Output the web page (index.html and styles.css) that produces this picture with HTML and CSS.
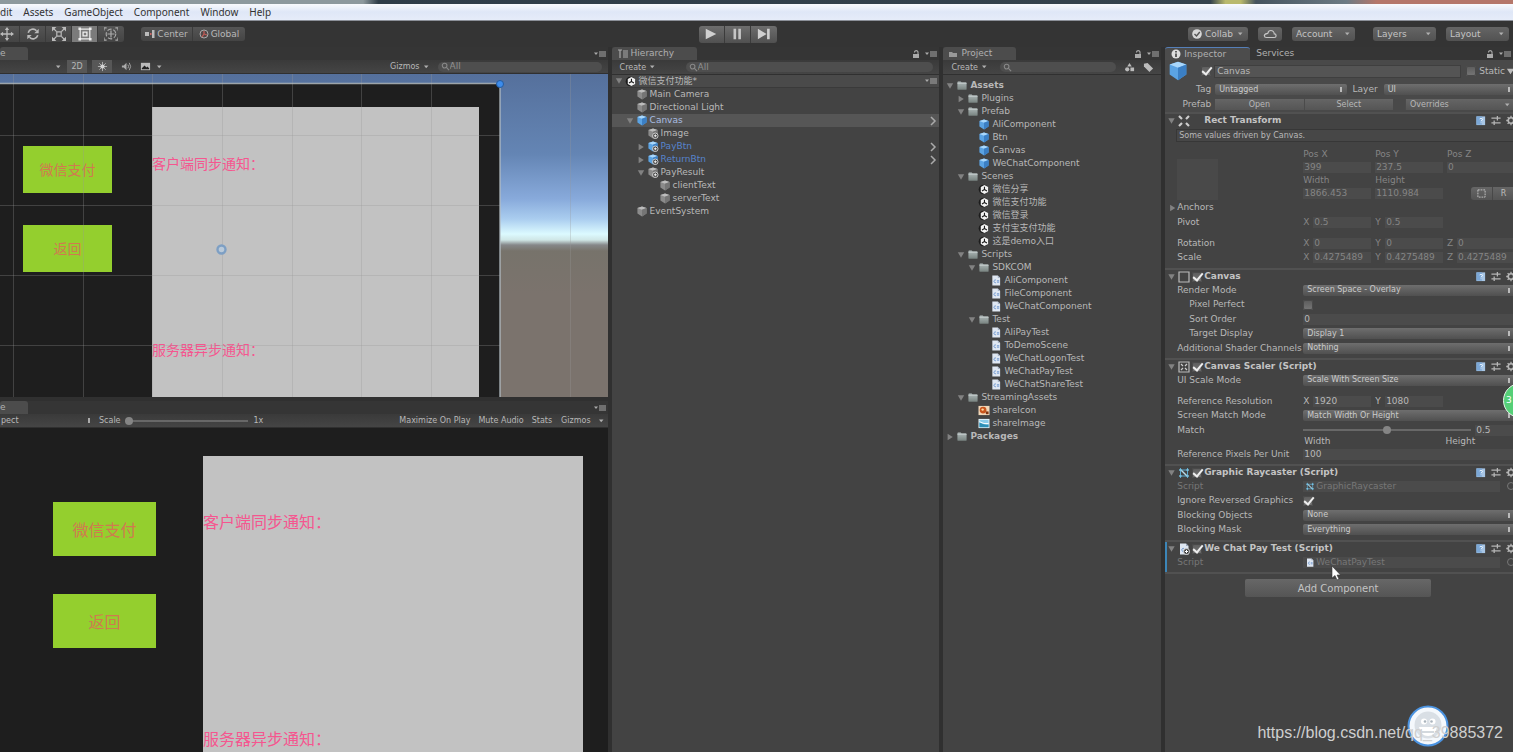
FILE: index.html
```html
<!DOCTYPE html>
<html lang="zh-CN">
<head>
<meta charset="utf-8">
<title>Unity Editor</title>
<link rel="stylesheet" href="styles.css">
</head>
<body>
<svg class="defs" aria-hidden="true">
  <defs>
    <linearGradient id="gf" x1="0" y1="0" x2="0" y2="1"><stop offset="0" stop-color="#b3bdbd"/><stop offset="1" stop-color="#77827f"/></linearGradient>
    <symbol id="cube" viewBox="0 0 12 12"><path d="M6 .5l5 1.6v6L6 11.500 1 8.100v-6z" fill="#8b8b8b"/><path d="M6 .5l5 1.600L6 4 1 2.100z" fill="#bdbdbd"/><path d="M6 4l5-1.900v6L6 11.500z" fill="#757575"/></symbol>
    <symbol id="bcube" viewBox="0 0 12 12"><path d="M6 .5l5 1.600v6L6 11.500 1 8.100v-6z" fill="#5ba3e3"/><path d="M6 .5l5 1.600L6 4 1 2.100z" fill="#a9d7fb"/><path d="M6 4l5-1.900v6L6 11.500z" fill="#3b7fc4"/></symbol>
    <symbol id="plus" viewBox="0 0 12 12"><circle cx="8.500" cy="8.500" r="3" fill="#333" stroke="#ddd" stroke-width="1"/><path d="M8.500 6.800v3.400M6.800 8.500h3.400" stroke="#fff"/></symbol>
    <symbol id="folder" viewBox="0 0 12 12"><path d="M1 2.500q0-1 1-1h2.500l1 1H10q1 0 1 1V10q0 .7-1 .7H2q-1 0-1-1z" fill="url(#gf)"/><path d="M1 3.700h10" stroke="#cdd5d4" stroke-width=".7"/></symbol>
    <symbol id="unity" viewBox="0 0 12 12"><circle cx="5.500" cy="6" r="5.300" fill="#1c1c1c"/><path d="M6.500 1l4 2.400v5.200l-4 2.400-4-2.400V3.400z" fill="#f2f2f2"/><path d="M6.500 6V3M6.500 6l2.700 1.600M6.500 6L3.800 7.600" stroke="#1c1c1c" stroke-width="1.200"/></symbol>
    <symbol id="cs" viewBox="0 0 12 12"><path d="M2 .5h6l2.500 2.500v8.500H2z" fill="#dfe7f2"/><path d="M8 .5v2.500h2.500z" fill="#98a6ba"/><path d="M6 5.600a1.500 1.500 0 1 0 0 2.600M7 6.300h2.500M7 7.800h2.500" stroke="#5c89c8" stroke-width=".9" fill="none"/></symbol>
    <symbol id="down" viewBox="0 0 10 10"><path d="M1 1.500h8L5 8.500z" fill="#828282"/></symbol>
    <symbol id="right" viewBox="0 0 10 10"><path d="M2 1v8l6.500-4z" fill="#828282"/></symbol>
    <symbol id="chev" viewBox="0 0 8 10"><path d="M2 1l4 4-4 4" fill="none" stroke="#aaa" stroke-width="1.500"/></symbol>
    <symbol id="lock" viewBox="0 0 8 10"><path d="M1 5h6v4H1z" fill="#aaa"/><path d="M2.500 3.500V3a1.800 1.800 0 0 1 3.500 0v2.500" fill="none" stroke="#aaa" stroke-width="1.100"/></symbol>
    <symbol id="menu" viewBox="0 0 12 8"><path d="M0 2.500h4L2 5z" fill="#aaa"/><path d="M5 2h7M5 4h7M5 6h7" stroke="#aaa" stroke-width="1.200"/></symbol>
    <symbol id="drop" viewBox="0 0 8 6"><path d="M2 1.500h4.500L4.200 4.200z" fill="#b0b0b0"/></symbol>
    <symbol id="search" viewBox="0 0 10 10"><circle cx="4" cy="4" r="2.600" fill="none" stroke="#888" stroke-width="1.200"/><path d="M6 6l3 3" stroke="#888" stroke-width="1.300"/></symbol>
    <symbol id="book" viewBox="0 0 12 12"><path d="M1 1.500h9.500v9.500H1z" fill="#a8c6e5"/><path d="M1 1.500h6v9H1z" fill="#7ba7d6"/><path d="M4.500 4.300q1.500-1.600 3 0 .4 1.200-1.400 2v.8M6.100 8v1" stroke="#eef6ff" fill="none"/></symbol>
    <symbol id="preset" viewBox="0 0 12 12"><path d="M1 3.500h10M1 8.500h10M7.500 1v5M4 6v5" stroke="#b5b5b5" stroke-width="1.400"/></symbol>
    <symbol id="gear" viewBox="0 0 12 12"><circle cx="6" cy="6" r="3" fill="none" stroke="#b5b5b5" stroke-width="1.800"/><path d="M6 .8v2M6 9.200v2M.8 6h2M9.200 6h2M2.300 2.300l1.400 1.400M8.300 8.300l1.400 1.400M9.700 2.300L8.300 3.700M3.700 8.300L2.300 9.700" stroke="#b5b5b5" stroke-width="1.400"/></symbol>
    <symbol id="ray" viewBox="0 0 12 12"><path d="M2.500 1v10M9.500 1v10M1 3h10M1 9h10" stroke="#5ba9cf"/><path d="M3 3l6 6" stroke="#b6dcec" stroke-width="1.400"/><path d="M1.500 2h2v2h-2zM8.500 2h2v2h-2zM1.500 8h2v2h-2zM8.500 8h2v2h-2z" fill="#7cc1e0"/></symbol>
  </defs>
</svg>

<div class="desktop-strip"></div>
<nav class="menubar">
  <a href="#edit">dit</a><a href="#assets">Assets</a><a href="#go">GameObject</a><a href="#comp">Component</a><a href="#win">Window</a><a href="#help">Help</a>
</nav>

<header class="toolbar">
  <div class="tools-left">
    <div class="group tools">
      <button aria-label="Move"><svg viewBox="0 0 16 16"><path d="M8 2v12M2 8h12" stroke="#bbb" stroke-width="1.500"/><path d="M8 0l2.500 3.500h-5zM8 16l2.500-3.500h-5zM0 8l3.500-2.500v5zM16 8l-3.500-2.500v5z" fill="#bbb"/></svg></button>
      <button aria-label="Rotate"><svg viewBox="0 0 16 16"><path d="M2.500 6.500A5.600 5.600 0 0 1 12 4.300M13.500 9.500A5.600 5.600 0 0 1 4 11.700" fill="none" stroke="#bbb" stroke-width="1.800"/><path d="M14.500 2v5h-5zM1.500 14V9h5z" fill="#bbb"/></svg></button>
      <button aria-label="Scale"><svg viewBox="0 0 16 16"><path d="M5.500 5.500h5v5h-5zM2 2l3 3M14 2l-3 3M2 14l3-3M14 14l-3-3" fill="none" stroke="#bbb" stroke-width="1.400"/><path d="M0 0h5L0 5zM16 0v5l-5-5zM0 16v-5l5 5zM16 16h-5l5-5z" fill="#bbb"/></svg></button>
      <button aria-label="Rect" class="on"><svg viewBox="0 0 16 16"><path d="M2.500 2.500h11v11h-11z" fill="none" stroke="#eee" stroke-width="1.400"/><path d="M.5.5h3v3h-3zM12.500.5h3v3h-3zM.5 12.500h3v3h-3zM12.500 12.500h3v3h-3z" fill="#eee"/><path d="M5.800 5.800h4.400v4.400H5.800z" fill="none" stroke="#eee" stroke-width="1.500"/></svg></button>
      <button aria-label="Transform"><svg viewBox="0 0 16 16"><circle cx="8" cy="8" r="5.500" fill="none" stroke="#aaa" stroke-width="1.300" stroke-dasharray="5 2"/><path d="M8 4v8M4 8h8M0 4V1h3M13 1h3v3M0 12v3h3M13 15h3v-3" fill="none" stroke="#aaa" stroke-width="1.400"/></svg></button>
    </div>
    <div class="group pivots">
      <button><svg viewBox="0 0 10 10"><path d="M0 3h4v4H0z" fill="#bbb"/><path d="M5 5h1.500" stroke="#c66" stroke-width="2"/><path d="M7 1h2.500v8H7z" fill="#bbb"/></svg>Center</button>
      <button><svg viewBox="0 0 10 10"><circle cx="5" cy="5" r="4" fill="#514848" stroke="#aaa"/><path d="M5 5V2M5 5l3 1M5 5L3 8" stroke="#c05b55" stroke-width="1.300"/></svg>Global</button>
    </div>
  </div>
  <div class="group play">
    <button aria-label="Play"><svg viewBox="0 0 16 16"><path d="M2 2l12 6-12 6z" fill="#d0d0d0"/></svg></button>
    <button aria-label="Pause"><svg viewBox="0 0 16 16"><path d="M4 2h3v12H4zM9.500 2h3v12h-3z" fill="#c5c5c5"/></svg></button>
    <button aria-label="Step"><svg viewBox="0 0 16 16"><path d="M1 2l10 6-10 6zM11.500 2h3v12h-3z" fill="#d0d0d0"/></svg></button>
  </div>
  <div class="tools-right">
    <button class="pill"><svg viewBox="0 0 10 10"><circle cx="5" cy="5" r="4.800" fill="#d8d8d8"/><path d="M2.500 5l2 2 3.300-4" fill="none" stroke="#555" stroke-width="1.400"/></svg>Collab<svg class="dd"><use href="#drop"/></svg></button>
    <button class="pill cloud" aria-label="Cloud"><svg viewBox="0 0 14 10"><path d="M3.500 8.500h7.800a1.800 1.800 0 0 0 0-3.600Q10.800 1.500 7.800 1.500 5.500 1.500 4.800 4.300 1.300 4.700 1.300 6.800q.2 1.700 2.200 1.700z" fill="none" stroke="#c5c5c5" stroke-width="1.200"/></svg></button>
    <button class="pill wide">Account<svg class="dd"><use href="#drop"/></svg></button>
    <button class="pill wide apart">Layers<svg class="dd"><use href="#drop"/></svg></button>
    <button class="pill wide">Layout<svg class="dd"><use href="#drop"/></svg></button>
  </div>
</header>

<main class="workspace">
  <div class="views">
    <section class="view">
      <div class="tabs"><button class="tab tab-cut">e</button><svg class="menu"><use href="#menu"/></svg></div>
      <div class="bar">
        <svg class="dd shade"><use href="#drop"/></svg>
        <button class="lit two-d">2D</button>
        <button class="lit" aria-label="Lighting"><svg viewBox="0 0 12 12"><circle cx="6" cy="6" r="2.300" fill="#eee"/><path d="M6 1v10M1 6h10M2.500 2.500l7 7M9.500 2.500l-7 7" stroke="#ccc" stroke-width=".8"/></svg></button>
        <button class="flat" aria-label="Audio"><svg viewBox="0 0 12 12"><path d="M1 5h2l3-3v8L3 7H1z" fill="#aaa"/><path d="M7.500 4q1.500 2 0 4M9 2q3 4 0 8" fill="none" stroke="#aaa"/></svg></button>
        <button class="flat" aria-label="Effects"><svg viewBox="0 0 12 12"><path d="M1 2h10v8H1z" fill="#bbb"/><path d="M2 8l3-3 2 2 1-1 2 2v1H2z" fill="#222"/></svg></button>
        <svg class="dd"><use href="#drop"/></svg>
        <button class="flat gizmos">Gizmos<svg class="dd"><use href="#drop"/></svg></button>
        <label class="search scene-search"><svg><use href="#search"/></svg><input type="text" aria-label="Search scene" value="All"></label>
      </div>
      <div class="scene">
        <div class="sky"></div>
        <div class="canvas-area"></div>
        <div class="sheet"></div>
        <button class="green s1">微信支付</button>
        <button class="green s2">返回</button>
        <p class="note n1">客户端同步通知<span class="colon">：</span></p>
        <p class="note n2">服务器异步通知<span class="colon">：</span></p>
        <svg class="grid-lines"><path d="M13.500 0v330M83.500 0v330M152.500 0v330M222.500 0v330M292.500 0v330M361.500 0v330M431.500 0v330M570.500 0v330M0 61.500h500M0 131.500h500M0 201.500h500M0 271.500h500" stroke="#999" stroke-opacity=".3"/><path d="M0 9.500h500V330" fill="none" stroke="#b3bcc2" stroke-opacity=".85" stroke-width="1.500"/><circle cx="500" cy="10" r="3.500" fill="#3c8cec" stroke="#245b9e"/><circle cx="221.500" cy="175.500" r="4" fill="#b9c9d9" stroke="#7d9fc4" stroke-width="2.400"/></svg>
      </div>
    </section>
    <section class="view">
      <div class="tabs"><button class="tab tab-cut">e</button><svg class="menu"><use href="#menu"/></svg></div>
      <div class="bar game-bar">
        <select class="aspect" aria-label="Aspect"><option>pect</option></select>
        <label class="scale">Scale<input type="range" min="1" max="5" value="1"></label><span>1x</span>
        <div class="bar-end"><button class="flat">Maximize On Play</button><button class="flat">Mute Audio</button><button class="flat">Stats</button><button class="flat wide-gap">Gizmos<svg class="dd"><use href="#drop"/></svg></button></div>
      </div>
      <div class="game">
        <div class="sheet"></div>
        <button class="green g1">微信支付</button>
        <button class="green g2">返回</button>
        <p class="note n3">客户端同步通知<span class="colon">：</span></p>
        <p class="note n4">服务器异步通知<span class="colon">：</span></p>
      </div>
    </section>
  </div>

  <section class="panel">
    <div class="tabs"><button class="tab"><svg viewBox="0 0 10 10"><path d="M0 1h4M2 1v8M5 2h5M5 4h5M5 6h5M5 8h5" stroke="#aaa" stroke-width="1.200"/></svg>Hierarchy</button><svg class="lock"><use href="#lock"/></svg><svg class="menu"><use href="#menu"/></svg></div>
    <div class="bar"><button class="flat create">Create<svg class="dd"><use href="#drop"/></svg></button><label class="search hier-search"><svg><use href="#search"/></svg><input type="text" aria-label="Search hierarchy" value="All"></label></div>
    <ul class="tree">
      <li class="root"><svg class="tw"><use href="#down"/></svg><svg class="ic"><use href="#unity"/></svg>微信支付功能*<svg class="menu end"><use href="#menu"/></svg></li>
      <li class="l1"><i class="tw"></i><svg class="ic"><use href="#cube"/></svg>Main Camera</li>
      <li class="l1"><i class="tw"></i><svg class="ic"><use href="#cube"/></svg>Directional Light</li>
      <li class="l1 sel"><svg class="tw"><use href="#down"/></svg><svg class="ic"><use href="#bcube"/></svg>Canvas<svg class="chev end"><use href="#chev"/></svg></li>
      <li class="l2"><i class="tw"></i><svg class="ic"><use href="#cube"/><use href="#plus"/></svg>Image</li>
      <li class="l2 blue"><svg class="tw"><use href="#right"/></svg><svg class="ic"><use href="#bcube"/><use href="#plus"/></svg>PayBtn<svg class="chev end"><use href="#chev"/></svg></li>
      <li class="l2 blue"><svg class="tw"><use href="#right"/></svg><svg class="ic"><use href="#bcube"/><use href="#plus"/></svg>ReturnBtn<svg class="chev end"><use href="#chev"/></svg></li>
      <li class="l2"><svg class="tw"><use href="#down"/></svg><svg class="ic"><use href="#cube"/><use href="#plus"/></svg>PayResult</li>
      <li class="l3"><i class="tw"></i><svg class="ic"><use href="#cube"/></svg>clientText</li>
      <li class="l3"><i class="tw"></i><svg class="ic"><use href="#cube"/></svg>serverText</li>
      <li class="l1"><i class="tw"></i><svg class="ic"><use href="#cube"/></svg>EventSystem</li>
    </ul>
  </section>

  <section class="panel">
    <div class="tabs"><button class="tab short"><svg viewBox="0 0 10 10"><path d="M1 3h3l1 1h4v4H1z" fill="#999"/></svg>Project</button><svg class="lock"><use href="#lock"/></svg><svg class="menu"><use href="#menu"/></svg></div>
    <div class="bar"><button class="flat create">Create<svg class="dd"><use href="#drop"/></svg></button><label class="search proj-search"><svg><use href="#search"/></svg><input type="text" aria-label="Search project"></label>
      <button class="flat" aria-label="Filter by type"><svg viewBox="0 0 12 12"><path d="M6 1l2.500 4h-5z" fill="#bbb"/><circle cx="3.500" cy="8" r="2.300" fill="#bbb"/><path d="M7 6h4v4H7z" fill="#bbb"/></svg></button>
      <button class="flat tag-filter" aria-label="Filter by label"><svg viewBox="0 0 12 12"><path d="M1 2l4-1 6 6-4 4-6-6z" fill="#bbb"/></svg></button></div>
    <ul class="tree proj">
      <li class="l0 b"><svg class="tw"><use href="#down"/></svg><svg class="ic"><use href="#folder"/></svg>Assets</li>
      <li class="l1"><svg class="tw"><use href="#right"/></svg><svg class="ic"><use href="#folder"/></svg>Plugins</li>
      <li class="l1"><svg class="tw"><use href="#down"/></svg><svg class="ic"><use href="#folder"/></svg>Prefab</li>
      <li class="l2"><i class="tw"></i><svg class="ic"><use href="#bcube"/></svg>AliComponent</li>
      <li class="l2"><i class="tw"></i><svg class="ic"><use href="#bcube"/></svg>Btn</li>
      <li class="l2"><i class="tw"></i><svg class="ic"><use href="#bcube"/></svg>Canvas</li>
      <li class="l2"><i class="tw"></i><svg class="ic"><use href="#bcube"/></svg>WeChatComponent</li>
      <li class="l1"><svg class="tw"><use href="#down"/></svg><svg class="ic"><use href="#folder"/></svg>Scenes</li>
      <li class="l2"><i class="tw"></i><svg class="ic"><use href="#unity"/></svg>微信分享</li>
      <li class="l2"><i class="tw"></i><svg class="ic"><use href="#unity"/></svg>微信支付功能</li>
      <li class="l2"><i class="tw"></i><svg class="ic"><use href="#unity"/></svg>微信登录</li>
      <li class="l2"><i class="tw"></i><svg class="ic"><use href="#unity"/></svg>支付宝支付功能</li>
      <li class="l2"><i class="tw"></i><svg class="ic"><use href="#unity"/></svg>这是demo入口</li>
      <li class="l1"><svg class="tw"><use href="#down"/></svg><svg class="ic"><use href="#folder"/></svg>Scripts</li>
      <li class="l2"><svg class="tw"><use href="#down"/></svg><svg class="ic"><use href="#folder"/></svg>SDKCOM</li>
      <li class="l3"><i class="tw"></i><svg class="ic"><use href="#cs"/></svg>AliComponent</li>
      <li class="l3"><i class="tw"></i><svg class="ic"><use href="#cs"/></svg>FileComponent</li>
      <li class="l3"><i class="tw"></i><svg class="ic"><use href="#cs"/></svg>WeChatComponent</li>
      <li class="l2"><svg class="tw"><use href="#down"/></svg><svg class="ic"><use href="#folder"/></svg>Test</li>
      <li class="l3"><i class="tw"></i><svg class="ic"><use href="#cs"/></svg>AliPayTest</li>
      <li class="l3"><i class="tw"></i><svg class="ic"><use href="#cs"/></svg>ToDemoScene</li>
      <li class="l3"><i class="tw"></i><svg class="ic"><use href="#cs"/></svg>WeChatLogonTest</li>
      <li class="l3"><i class="tw"></i><svg class="ic"><use href="#cs"/></svg>WeChatPayTest</li>
      <li class="l3"><i class="tw"></i><svg class="ic"><use href="#cs"/></svg>WeChatShareTest</li>
      <li class="l1"><svg class="tw"><use href="#down"/></svg><svg class="ic"><use href="#folder"/></svg>StreamingAssets</li>
      <li class="l2"><i class="tw"></i><svg class="ic" viewBox="0 0 12 12"><path d="M0 1h12v10H0z" fill="#f0d7b8"/><circle cx="5" cy="5.500" r="3.700" fill="#c8541c"/><circle cx="4.500" cy="5" r="1.300" fill="#ffd9a0"/><path d="M8 7h3v3H8z" fill="#7d3512"/></svg>shareIcon</li>
      <li class="l2"><i class="tw"></i><svg class="ic" viewBox="0 0 12 12"><path d="M0 1h12v10H0z" fill="#e6f4fa"/><path d="M1 2h10v8H1z" fill="#8acbe9"/><path d="M1 5q5 3 10 2v3H1z" fill="#2e8fb5"/><path d="M1 4q5 3 10 2" stroke="#fff" fill="none"/></svg>shareImage</li>
      <li class="l0 b"><svg class="tw"><use href="#right"/></svg><svg class="ic"><use href="#folder"/></svg>Packages</li>
    </ul>
  </section>

  <section class="panel inspector">
    <div class="tabs"><button class="tab focus"><svg viewBox="0 0 10 10"><circle cx="5" cy="5" r="4.500" fill="#ddd"/><path d="M5 2v1.500M5 4.500V8" stroke="#333" stroke-width="1.500"/></svg>Inspector</button><button class="tab off">Services</button><svg class="lock"><use href="#lock"/></svg><svg class="menu"><use href="#menu"/></svg></div>
    <div class="insp-body">
      <div class="obj-head">
        <div class="cube-cell"><svg><use href="#bcube"/></svg><input type="checkbox" aria-label="Active" checked></div>
        <div class="line name-line"><input type="text" class="name" aria-label="Name" value="Canvas"><label class="static"><input type="checkbox">Static</label><svg class="tri" viewBox="0 0 10 10"><path d="M1 2h8L5 8z" fill="#bbb"/></svg></div>
        <label class="rlabel" for="tag">Tag</label>
        <div class="line"><select id="tag"><option>Untagged</option></select><label for="layer">Layer</label><select id="layer"><option>UI</option></select></div>
        <span class="rlabel">Prefab</span>
        <div class="line prefab"><button>Open</button><button>Select</button><button class="over">Overrides<svg class="dd"><use href="#drop"/></svg></button></div>
      </div>

      <section class="comp">
        <h2><svg class="tw"><use href="#down"/></svg><svg class="ic" viewBox="0 0 12 12"><path d="M1 1l3 3M11 1L8 4M1 11l3-3M11 11L8 8" stroke="#ccc" stroke-width="2.200"/></svg><b>Rect Transform</b><span class="acts"><svg><use href="#book"/></svg><svg><use href="#preset"/></svg><svg><use href="#gear"/></svg></span></h2>
        <p class="help">Some values driven by Canvas.</p>
        <div class="rect-block">
          <div class="anchor-box"></div>
          <div class="rect-fields">
            <label for="px">Pos X</label><label for="py">Pos Y</label><label for="pz">Pos Z</label>
            <input id="px" type="text" value="399"><input id="py" type="text" value="237.5"><input id="pz" type="text" value="0">
            <label for="w">Width</label><label for="h">Height</label><i></i>
            <input id="w" type="text" value="1866.453"><input id="h" type="text" value="1110.984"><span class="rbtns"><button aria-label="Blueprint"><svg viewBox="0 0 10 10"><path d="M1 1h8v8H1z" fill="none" stroke="#ccc" stroke-dasharray="2 1"/></svg></button><button>R</button></span>
          </div>
        </div>
        <div class="row tall fold"><svg class="tw"><use href="#right"/></svg><span>Anchors</span></div>
        <div class="row dim"><span>Pivot</span><div class="xyz"><label>X<input type="text" value="0.5"></label><label>Y<input type="text" value="0.5"></label></div></div>
        <div class="row dim spaced"><span>Rotation</span><div class="xyz"><label>X<input type="text" value="0"></label><label>Y<input type="text" value="0"></label><label>Z<input type="text" value="0"></label></div></div>
        <div class="row tall dim"><span>Scale</span><div class="xyz"><label>X<input type="text" value="0.4275489"></label><label>Y<input type="text" value="0.4275489"></label><label>Z<input type="text" value="0.4275489"></label></div></div>
      </section>

      <section class="comp">
        <h2><svg class="tw"><use href="#down"/></svg><svg class="ic" viewBox="0 0 12 12"><path d="M1 1h10v10H1z" fill="none" stroke="#bbb" stroke-width="1.200"/></svg><input type="checkbox" aria-label="Canvas enabled" checked><b>Canvas</b><span class="acts"><svg><use href="#book"/></svg><svg><use href="#preset"/></svg><svg><use href="#gear"/></svg></span></h2>
        <div class="row"><label for="rm">Render Mode</label><select id="rm"><option>Screen Space - Overlay</option></select></div>
        <div class="row tall sub"><label for="pp">Pixel Perfect</label><input id="pp" type="checkbox"></div>
        <div class="row sub"><label for="so">Sort Order</label><input id="so" type="text" value="0"></div>
        <div class="row tall sub"><label for="td">Target Display</label><select id="td"><option>Display 1</option></select></div>
        <div class="row"><label for="asc">Additional Shader Channels</label><select id="asc"><option>Nothing</option></select></div>
      </section>

      <section class="comp">
        <h2><svg class="tw"><use href="#down"/></svg><svg class="ic" viewBox="0 0 12 12"><path d="M1 1h10v10H1z" fill="none" stroke="#bbb" stroke-width="1.200"/><path d="M3 3l2 2M9 3L7 5M3 9l2-2M9 9L7 7" stroke="#ccc" stroke-width="1.200"/></svg><input type="checkbox" aria-label="Scaler enabled" checked><b>Canvas Scaler (Script)</b><span class="acts"><svg><use href="#book"/></svg><svg><use href="#preset"/></svg><svg><use href="#gear"/></svg></span></h2>
        <div class="row"><label for="us">UI Scale Mode</label><select id="us"><option>Scale With Screen Size</option></select></div>
        <div class="row spaced"><span>Reference Resolution</span><div class="xyz"><label>X<input type="text" value="1920"></label><label>Y<input type="text" value="1080"></label></div></div>
        <div class="row tall"><label for="sm">Screen Match Mode</label><select id="sm"><option>Match Width Or Height</option></select></div>
        <div class="row"><label for="mt">Match</label><div class="slide"><input id="mt" type="range" min="0" max="1" step="0.1" value="0.5"><input type="text" aria-label="Match value" value="0.5"></div></div>
        <div class="ends"><span>Width</span><span>Height</span></div>
        <div class="row"><label for="rp">Reference Pixels Per Unit</label><input id="rp" type="text" value="100"></div>
      </section>

      <section class="comp">
        <h2><svg class="tw"><use href="#down"/></svg><svg class="ic"><use href="#ray"/></svg><input type="checkbox" aria-label="Raycaster enabled" checked><b>Graphic Raycaster (Script)</b><span class="acts"><svg><use href="#book"/></svg><svg><use href="#preset"/></svg><svg><use href="#gear"/></svg></span></h2>
        <div class="row faded"><span>Script</span><div class="obj"><a href="#gr"><svg><use href="#ray"/></svg>GraphicRaycaster</a><i class="pick"></i></div></div>
        <div class="row tall"><label for="ir">Ignore Reversed Graphics</label><input id="ir" type="checkbox" checked></div>
        <div class="row"><label for="bo">Blocking Objects</label><select id="bo"><option>None</option></select></div>
        <div class="row tall"><label for="bm">Blocking Mask</label><select id="bm"><option>Everything</option></select></div>
      </section>

      <section class="comp added">
        <h2><svg class="tw"><use href="#down"/></svg><svg class="ic"><use href="#cs"/><use href="#plus"/></svg><input type="checkbox" aria-label="Test enabled" checked><b>We Chat Pay Test (Script)</b><span class="acts"><svg><use href="#book"/></svg><svg><use href="#preset"/></svg><svg><use href="#gear"/></svg></span></h2>
        <div class="row faded"><span>Script</span><div class="obj"><a href="#wp"><svg><use href="#cs"/></svg>WeChatPayTest</a><i class="pick"></i></div></div>
      </section>
      <div class="add-wrap"><button class="add">Add Component</button></div>
    </div>
  </section>
</main>

<svg class="cursor" viewBox="0 0 10 16"><path d="M1 1v12l3-2.500L6 15l2-1-2-4h3.500z" fill="#fff" stroke="#333" stroke-width=".6"/></svg>
<div class="bubble">3</div>
<svg class="robot" viewBox="0 0 42 42"><circle cx="21" cy="21" r="19.500" fill="#f4f8fc" stroke="#4b93e0" stroke-width="2"/><circle cx="21" cy="20" r="13.500" fill="#d9dfe5"/><circle cx="17" cy="16.500" r="3" fill="#fff"/><circle cx="25.500" cy="16.500" r="3" fill="#fff"/><circle cx="18" cy="16.500" r="1.300" fill="#aab4bd"/><circle cx="24.500" cy="16.500" r="1.300" fill="#aab4bd"/><path d="M12 22h18q-2 9-9 9t-9-9z" fill="#fff"/><path d="M15 27h12" stroke="#c4ccd3" stroke-width="1.500"/></svg>
<p class="watermark">https://blog.csdn.net/qq_39885372</p>
</body>
</html>
```
FILE: styles.css
```css
* { box-sizing: border-box; }
body {
  margin: 0; height: 100vh; overflow: hidden; position: relative;
  display: flex; flex-direction: column;
  background: #343434; color: #b8b8b8;
  font: 9px/13px "DejaVu Sans", "Noto Sans CJK SC", sans-serif;
}
p, ul, h2 { margin: 0; padding: 0; }
ul { list-style: none; }
svg { display: block; flex: none; }
button, input, select { font: inherit; color: inherit; margin: 0; padding: 0; border: 0; background: none; min-width: 0; }
a { color: inherit; text-decoration: none; }
.defs { position: absolute; width: 0; height: 0; }
.dd { width: 8px; height: 6px; }
.menu { width: 12px; height: 8px; }
.lock { width: 8px; height: 10px; margin-left: auto; margin-right: 2px; }
.chev { width: 8px; height: 10px; }

.desktop-strip { flex: none; height: 4px; background: linear-gradient(90deg, #8d999d 24%, #2f3d48 25%, #35434d 80%, #b9b96c 81%, #b9b96c 82%, #46545e 83%, #6c7b84 89%, #b5776a 91%); }
.menubar {
  flex: none; height: 17px; display: flex; align-items: center; gap: 11px;
  background: linear-gradient(#f8fafd, #dfe7f7 50%, #e6ecf9); border-bottom: 1px solid #8c9099;
  color: #333; font: 10px/15px "Noto Sans", sans-serif;
}

.toolbar { flex: none; height: 26px; display: grid; grid-template-columns: 699fr auto 737fr; align-items: center; background: #343434; }
.tools-left, .tools-right, .group { display: flex; align-items: center; }
.tools-left { gap: 17px; }
.group { border-radius: 3px; overflow: hidden; background: linear-gradient(#555, #444); }
.group button { display: flex; align-items: center; justify-content: center; gap: 2px; height: 16px; border-right: 1px solid #3b3b3b; }
.group button:last-child { border-right: 0; }
.tools { margin-left: -6px; }
.tools button { width: 26px; }
.tools svg { width: 14px; height: 14px; }
.tools .on { background: #7b7b7b; }
.pivots button { width: 52px; height: 14px; }
.pivots svg { width: 10px; height: 10px; }
.play { background: linear-gradient(#6d6d6d, #505050); }
.play button { width: 26px; height: 17px; }
.play svg { width: 14px; height: 14px; }
.tools-right { justify-content: flex-end; gap: 10px; padding-right: 4px; }
.pill { display: flex; align-items: center; justify-content: space-between; gap: 3px; height: 14px; padding: 0 4px; border-radius: 3px; background: linear-gradient(#656565, #525252); color: #c4c4c4; }
.pill > svg:first-child:not(.dd) { width: 10px; height: 10px; }
.pill.cloud { width: 24px; justify-content: center; }
.pill.cloud > svg:first-child { width: 14px; }
.wide { width: 63px; }
.apart { margin-left: 8px; }

.workspace { flex: 1; min-height: 0; display: grid; grid-template-columns: 608fr 328fr 218fr 348fr; grid-template-rows: minmax(0, 1fr); column-gap: 4px; background: #303030; }
.views { display: grid; grid-template-rows: 350fr 351fr; gap: 4px; min-width: 0; min-height: 0; }
.view, .panel { display: flex; flex-direction: column; min-width: 0; min-height: 0; overflow: hidden; }
.panel { background: #434343; }
.tabs { flex: none; height: 13px; display: flex; align-items: center; gap: 3px; background: #353535; padding-right: 2px; }
.tabs > .menu:nth-child(2) { margin-left: auto; }
.tab { height: 13px; width: 85px; display: flex; align-items: center; gap: 3px; padding-left: 6px; border-radius: 3px 3px 0 0; background: #4c4c4c; color: #b0b0b0; }
.tab svg { width: 10px; height: 10px; }
.tab.short { width: 73px; padding-left: 5px; }
.tab-cut { width: 28px; padding-left: 0; }
.off { background: none; width: 60px; padding-left: 3px; }
.focus { border-top: 1px solid #557fb8; }
.bar { flex: none; height: 15px; display: flex; align-items: center; background: linear-gradient(#3a3a3a, #454545); border-bottom: 1px solid #303030; font-size: 8px; }
.view .bar { height: 14px; }
.bar button { display: flex; align-items: center; gap: 2px; height: 13px; }
.bar button svg:not(.dd) { width: 11px; height: 11px; }
.bar .lit { background: #575757; justify-content: center; width: 20px; margin-right: 5px; }
.shade { margin-left: 54px; margin-right: 5px; }
.flat { padding: 0 4px; }
.gizmos { margin-left: auto; }
.search { display: flex; align-items: center; gap: 0; height: 10px; border-radius: 5px; background: #4e4e4e; color: #909090; padding-left: 3px; font-size: 9px; min-width: 0; }
.search svg { width: 9px; height: 9px; }
.search input { flex: 1; width: 0; height: 10px; }
.scene-search { width: 27%; margin: 0 6px 0 4px; }
.hier-search { flex: 1; margin: 0 6px 0 20px; }
.proj-search { flex: 1; margin: 0 4px 0 3px; }
.tag-filter { margin-right: 3px; }
.bar .create { width: 54px; padding-left: 8px; }

.scene, .game { flex: 1; position: relative; overflow: hidden; background: #1e1e1e; font-family: "Noto Sans CJK SC", sans-serif; }
.sky { position: absolute; inset: 0; background: linear-gradient(#55709c, #6485b4 80px, #88aadb 125px, #aacdef 145px, #dcfaff 160px, #cfe6e6 166px, #858789 171px, #77736b 177px, #7b736d 220px, #7b736d); }
.canvas-area { position: absolute; left: 0; width: 500px; top: 9px; bottom: 0; background: #1e1e1e; }
.sheet { position: absolute; background: #c2c2c2; }
.scene .sheet { left: 152px; width: 327px; top: 33px; bottom: 0; }
.game .sheet { left: 203px; width: 380px; top: 28px; bottom: 0; }
.green { position: absolute; background: #94cf2e; color: #d07a50; }
.s1, .s2 { left: 23px; width: 89px; height: 47px; font-size: 14px; }
.s1 { top: 72px; }
.s2 { top: 151px; }
.g1, .g2 { left: 53px; width: 103px; height: 54px; font-size: 16px; }
.g1 { top: 74px; }
.g2 { top: 166px; }
.note { position: absolute; color: #f5568f; white-space: nowrap; line-height: 20px; }
.colon { font-family: "Noto Sans CJK TC", sans-serif; }
.n1, .n2 { left: 152px; font-size: 14px; }
.n1 { top: 79px; }
.n2 { top: 265px; }
.n3, .n4 { left: 203px; font-size: 16px; }
.n3 { top: 83px; }
.n4 { top: 300px; }
.grid-lines { position: absolute; inset: 0; width: 100%; height: 100%; }
.scale { display: flex; align-items: center; gap: 4px; margin: 0 6px 0 7px; }
.scale input { width: 123px; }
.bar-end { margin-left: auto; margin-right: 3px; display: flex; }
.bar .wide-gap { gap: 6px; padding: 0 0 0 5px; }
input[type=range] { appearance: none; height: 10px; background: linear-gradient(#686868, #686868) center / 100% 2px no-repeat; }
input[type=range]::-webkit-slider-thumb { appearance: none; width: 8px; height: 8px; border-radius: 50%; background: #858585; }

.tree { display: flex; flex-direction: column; }
.proj { padding-top: 4px; }
.tree li { display: flex; align-items: center; height: 13px; padding-left: 2px; padding-right: 2px; white-space: pre; }
.tree .tw { width: 10px; height: 8px; margin-right: 1px; }
.tree .ic { width: 12px; height: 11px; margin-right: 2px; }
.tree .root { background: #4a4a4a; border-bottom: 1px solid #3a3a3a; }
.tree .l1 { padding-left: 13px; }
.tree .l2 { padding-left: 24px; }
.tree .l3 { padding-left: 36px; }
.tree .sel { background: #565656; color: #a9bde2; }
.tree .blue { color: #5784cc; }
.b { font-weight: bold; }
.tree .end { margin-left: auto; }

.insp-body { margin-right: -2px; flex: 1; overflow: hidden; }
.obj-head { display: grid; grid-template-columns: 46px 1fr; column-gap: 4px; grid-template-rows: 22px 15px 15px; align-items: center; background: #494949; }
.cube-cell { display: flex; justify-content: space-between; align-items: center; padding-left: 3px; }
.cube-cell svg { width: 20px; height: 20px; }
.line { display: flex; align-items: center; gap: 6px; }
.line select { flex: 1; }
.rlabel { text-align: right; }
.name { flex: 1; height: 11px; padding-left: 2px; background: #545454; box-shadow: 0 0 0 1px #3f3f3f; }
.static { display: flex; align-items: center; gap: 3px; }
.tri { width: 9px; height: 9px; margin-left: -5px; }
.prefab { gap: 0; font-size: 8px; }
.prefab button { flex: 1; height: 11px; line-height: 11px; background: linear-gradient(#656565, #555); }
.prefab button + button { border-left: 1px solid #4b4b4b; }
.prefab .over { flex: 0 0 110px; margin-left: 12px; padding: 0 4px; display: flex; align-items: center; justify-content: space-between; }
select { appearance: none; height: 11px; line-height: 9px; padding: 0 4px 1px; border-radius: 2px; font-size: 8px; background: linear-gradient(#bbb, #bbb) right 5px center / 2px 5px no-repeat, linear-gradient(#6e6e6e, #505050); color: #cacaca; }
.bar .aspect { width: 92px; padding: 0 0 1px 1px; color: #bbb; background: linear-gradient(#aaa, #aaa) right 2px center / 2px 5px no-repeat; }
input[type=text] { width: 100%; }
input[type=checkbox] { appearance: none; flex: none; width: 10px; height: 10px; border-radius: 2px; background: linear-gradient(#5b5b5b, #777); box-shadow: inset 0 0 0 1px #494949; position: relative; }
input[type=checkbox]:checked::after { content: ""; position: absolute; left: 3px; top: -1px; width: 4px; height: 8px; border: solid #eee; border-width: 0 2px 2px 0; transform: rotate(40deg); }

.comp { border-top: 2px solid #515151; padding-bottom: 3px; }
.comp h2 { height: 13px; display: grid; grid-template-columns: 9px 12px 10px 1fr auto; column-gap: 2px; align-items: center; padding-left: 2px; font-size: 9px; color: #c4c4c4; white-space: nowrap; }
.comp h2 b { grid-column: 4; }
.comp .tw { width: 9px; height: 8px; }
.comp .ic { width: 12px; height: 12px; }
.acts { display: flex; gap: 3px; margin-right: -2px; }
.acts svg { width: 12px; height: 11px; }
.help { margin: 2px 0 6px 11px; padding-left: 2px; height: 13px; line-height: 11px; border: 1px solid #373737; background: #474747; font-size: 8px; }
.rect-block { display: grid; grid-template-columns: 126px 1fr; padding-left: 12px; color: #858585; }
.anchor-box { width: 41px; height: 41px; margin-top: 11px; background: #494949; }
.rect-fields { display: grid; grid-template-columns: repeat(3, minmax(0, 1fr)); column-gap: 4px; grid-template-rows: 13px; grid-auto-rows: 13px; align-items: center; }
.rect-fields input, .xyz input, .row > input[type=text], .slide input[type=text] { height: 11px; padding-left: 1px; background: #4b4b4b; }
.rbtns { display: flex; margin-left: 24px; border-radius: 3px; overflow: hidden; }
.rbtns button { flex: 1; height: 13px; display: flex; align-items: center; justify-content: center; background: linear-gradient(#666, #545454); border-right: 1px solid #484848; font-size: 8px; color: #bbb; }
.rbtns svg { width: 9px; height: 9px; }
.row { display: grid; grid-template-columns: 126px minmax(0, 1fr); align-items: center; height: 14px; padding-left: 12px; }
.row > :first-child { white-space: nowrap; overflow: hidden; }
.row.tall { height: 15px; }
.row.spaced { margin-top: 7px; }
.row.sub > :first-child { padding-left: 12px; }
.row.fold { grid-template-columns: 9px 1fr; column-gap: 0; padding-left: 3px; }
.xyz { display: grid; grid-template-columns: repeat(3, minmax(0, 1fr)); column-gap: 4px; }
.xyz label { display: grid; grid-template-columns: 10px minmax(0, 1fr); align-items: center; }
.dim .xyz { color: #858585; }
.slide { display: grid; grid-template-columns: 168px 1fr; column-gap: 4px; align-items: center; }
.ends { display: flex; justify-content: space-between; width: 172px; margin-left: 138px; padding-left: 1px; height: 10px; line-height: 8px; }
.faded { color: #777; }
.obj { display: flex; align-items: center; gap: 7px; }
.obj a { flex: 1; display: flex; align-items: center; gap: 1px; padding-left: 2px; height: 11px; background: #4b4b4b; }
.obj svg { width: 10px; height: 9px; }
.pick { width: 8px; height: 8px; border: 1px solid #777; border-radius: 50%; }
.added { border-bottom: 2px solid #515151; background: linear-gradient(#3c86b8, #3c86b8) left / 2px 100% no-repeat; }
.add-wrap { display: flex; justify-content: center; padding: 5px 4px 0 0; }
.add { width: 186px; height: 18px; font-size: 10px; border-radius: 2px; background: linear-gradient(#676767, #555); color: #c4c4c4; }

.cursor { position: absolute; left: 1331px; top: 565px; width: 10px; height: 16px; }
.bubble { position: absolute; right: -25px; top: 383px; width: 35px; height: 35px; border-radius: 50%; border: 1px solid #e5f5e8; background: #55cf77; color: #fff; line-height: 33px; padding-left: 2px; }
.robot { position: absolute; right: 64px; bottom: 5px; width: 42px; height: 42px; }
.watermark { position: absolute; right: 10px; bottom: 9px; font: 16px/20px "Liberation Sans", sans-serif; color: #cfcfcf; }
```
